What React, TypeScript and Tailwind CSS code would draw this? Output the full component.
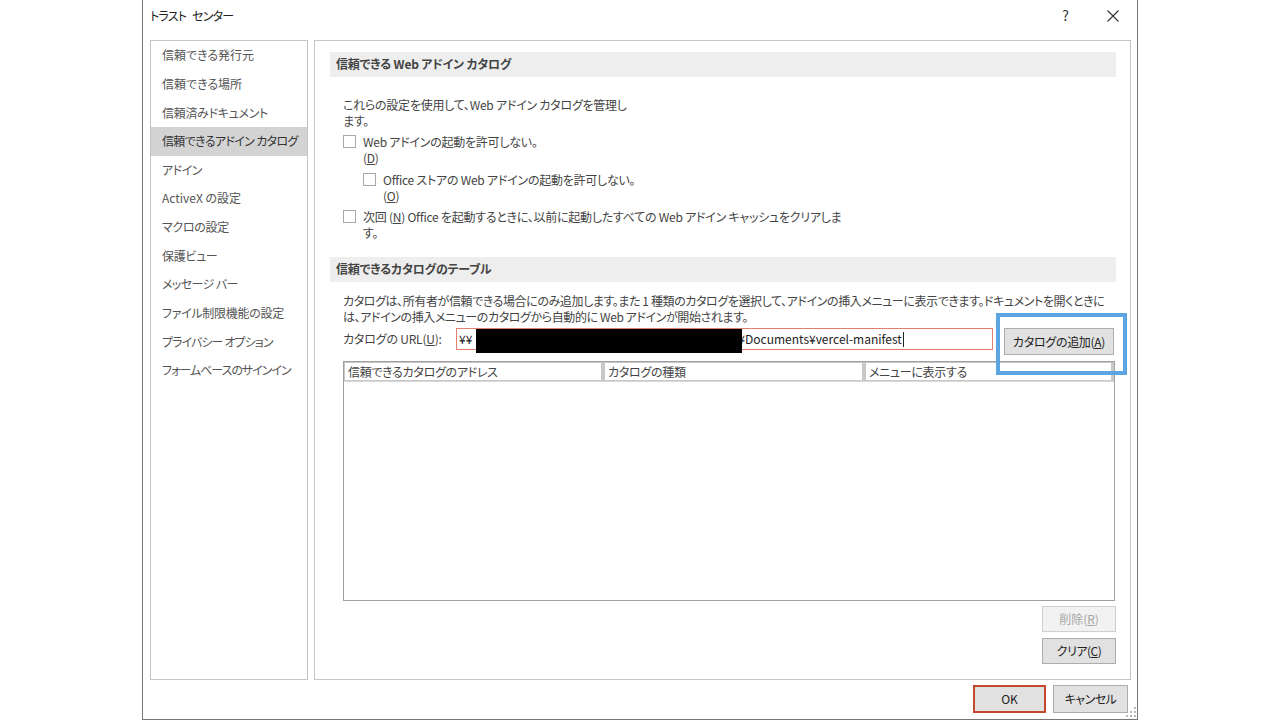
import React from "react";

const font = { fontFamily: '"Noto Sans CJK JP", "Noto Sans", sans-serif' };

const navItems: [string, string][] = [
  ["信頼できる発行元", ""],
  ["信頼できる場所", ""],
  ["信頼済みドキュメント", "tracking-[-0.3px]"],
  ["信頼できるアドイン カタログ", "tracking-[-0.65px]"],
  ["アドイン", "tracking-[-0.5px]"],
  ["ActiveX の設定", ""],
  ["マクロの設定", "tracking-[-0.3px]"],
  ["保護ビュー", "tracking-[-0.3px]"],
  ["メッセージ バー", "tracking-[-0.6px]"],
  ["ファイル制限機能の設定", "tracking-[-0.3px]"],
  ["プライバシー オプション", "tracking-[-0.9px]"],
  ["フォームベースのサインイン", "tracking-[-1px]"],
];

function Checkbox() {
  return <div className="w-[13px] h-[13px] border border-[#a8a8a8] bg-white shrink-0 mt-[1px]" />;
}

function SectionHeader({ children }: { children: React.ReactNode }) {
  return (
    <div className="h-[25px] bg-[#eeeeee] flex items-center pl-[6px] pb-[2px] font-bold text-[12px] text-[#444444] tracking-[-0.2px]">
      {children}
    </div>
  );
}

export default function App() {
  return (
    <div
      className="w-[1280px] h-[720px] bg-white pl-[142px] [font-feature-settings:'palt'] text-[#444444]"
      style={font}
    >
      <div className="relative w-[996px] h-[720px] border-l border-r border-b border-[#777777] bg-white flex flex-col">
        {/* title bar */}
        <div className="h-[40px] flex items-start pt-[7px] pl-[7px] pr-[18px]">
          <div className="text-[12px] text-[#222222] leading-[18px] tracking-[-0.8px]">
            トラスト<span className="inline-block w-[4px]" /> センター
          </div>
          <div className="ml-auto flex items-start gap-[38px]">
            <div className="text-[14px] text-[#333333] leading-[18px] mt-[-1px]">?</div>
            <svg width="12" height="12" viewBox="0 0 12 12" className="mt-[3px]">
              <path d="M0.5 0.5 L11.5 11.5 M11.5 0.5 L0.5 11.5" stroke="#333333" strokeWidth="1.1" />
            </svg>
          </div>
        </div>

        {/* panels */}
        <div className="flex h-[640px] pl-[7px] gap-[6px]">
          {/* nav */}
          <div className="w-[158px] h-full border border-[#c4c4c4] flex flex-col">
            {navItems.map(([t, tr], i) => (
              <div
                key={t}
                className={
                  "h-[28.64px] flex items-center pl-[11px] text-[12px] whitespace-nowrap " +
                  tr +
                  " " +
                  (i === 3 ? "bg-[#d3d3d3] text-[#333333]" : "text-[#555555]")
                }
              >
                {t}
              </div>
            ))}
          </div>

          {/* right panel */}
          <div className="w-[817px] h-full border border-[#c4c4c4] pl-[15px] pr-[14px] pt-[11px] flex flex-col">
            <SectionHeader>信頼できる Web アドイン カタログ</SectionHeader>

            <div className="pl-[13px] text-[12px] leading-[15.5px] text-[#444444] tracking-[-0.25px]">
              <div className="mt-[20px] whitespace-nowrap">
                これらの設定を使用して、Web アドイン カタログを管理し
                <br />
                ます。
              </div>

              <div className="flex gap-[7px] mt-[6px]">
                <Checkbox />
                <div className="whitespace-nowrap">
                  Web アドインの起動を許可しない。
                  <br />(<span className="underline">D</span>)
                </div>
              </div>

              <div className="flex gap-[7px] mt-[7px] pl-[20px]">
                <Checkbox />
                <div className="whitespace-nowrap">
                  Office ストアの Web アドインの起動を許可しない。
                  <br />(<span className="underline">O</span>)
                </div>
              </div>

              <div className="flex gap-[7px] mt-[6px]">
                <Checkbox />
                <div className="whitespace-nowrap">
                  次回 (<span className="underline">N</span>) Office を起動するときに、以前に起動したすべての Web アドイン キャッシュをクリアしま
                  <br />す。
                </div>
              </div>
            </div>

            <div className="mt-[17px]">
              <SectionHeader>信頼できるカタログのテーブル</SectionHeader>
            </div>

            <div className="pl-[13px] text-[12px] text-[#444444]">
              <div className="mt-[11px] leading-[16px] whitespace-nowrap tracking-[-0.4px]">
                カタログは、所有者が信頼できる場合にのみ追加します。また 1 種類のカタログを選択して、アドインの挿入メニューに表示できます。ドキュメントを開くときに
                <br />
                は、アドインの挿入メニューのカタログから自動的に Web アドインが開始されます。
              </div>

              <div className="flex items-start mt-[3px] h-[33px]">
                <div className="w-[113px] pt-[3px] leading-[16px] whitespace-nowrap tracking-[-0.2px]">
                  カタログの URL(<span className="underline">U</span>):
                </div>
                <div className="relative w-[537px] h-[22px] border border-[#e08070] bg-white flex items-center pl-[2px] text-[12px] text-[#222222]">
                  <span>¥¥</span>
                  <span className="inline-block w-[266px] shrink-0" />
                  <span className="whitespace-nowrap">¥Documents¥vercel-manifest</span>
                  <span className="inline-block w-px h-[15px] bg-[#222222] ml-[1px]" />
                  <div className="absolute left-[19px] top-[0px] w-[266px] h-[24px] bg-black" />
                </div>
                <div className="ml-[11px] w-[110px] h-[27px] border border-[#adadad] bg-[#e1e1e1] flex items-center justify-center text-[12px] text-[#222222] whitespace-nowrap tracking-[-0.3px]">
                  カタログの追加(<span className="underline">A</span>)
                </div>
              </div>

              {/* table */}
              <div className="w-[772px] h-[240px] border border-[#a0a0a0] bg-white flex flex-col">
                <div className="flex h-[20px] border-b border-[#d8d8d8]">
                  {[
                    ["信頼できるカタログのアドレス", "w-[260px]"],
                    ["カタログの種類", "w-[261px]"],
                    ["メニューに表示する", "flex-1"],
                  ].map(([t, w]) => (
                    <div
                      key={t}
                      className={
                        w +
                        " h-full border border-[#c8c8c8] border-r-[3px] border-r-[#c8c8c8] bg-white flex items-center pl-[3px] text-[12px] text-[#444444] whitespace-nowrap tracking-[-0.3px]"
                      }
                    >
                      {t}
                    </div>
                  ))}
                </div>
              </div>

              <div className="flex flex-col items-end gap-[6px] mt-[5px]">
                <div className="w-[74px] h-[26px] border border-[#cfcfcf] bg-[#f2f2f2] flex items-center justify-center text-[12px] text-[#a6a6a6]">
                  削除(<span className="underline">R</span>)
                </div>
                <div className="w-[74px] h-[26px] border border-[#adadad] bg-[#e1e1e1] flex items-center justify-center text-[12px] text-[#222222] tracking-[-0.5px]">
                  クリア(<span className="underline">C</span>)
                </div>
              </div>
            </div>
          </div>
        </div>

        {/* bottom buttons */}
        <div className="flex justify-end gap-[7px] pr-[9px] pt-[5px]">
          <div className="w-[73px] h-[28px] border-2 border-[#c4482c] bg-[#e1e1e1] flex items-center justify-center text-[12px] text-[#222222]">
            OK
          </div>
          <div className="w-[75px] h-[28px] border border-[#adadad] bg-[#e1e1e1] flex items-center justify-center text-[12px] text-[#222222] tracking-[-0.5px]">
            キャンセル
          </div>
        </div>

        {/* resize grip */}
        <svg className="absolute right-[1px] bottom-[2px]" width="10" height="10" viewBox="0 0 10 10">
          {[
            [8, 0], [8, 4], [4, 4], [8, 8], [4, 8], [0, 8],
          ].map(([x, y], i) => (
            <rect key={i} x={x} y={y} width="2" height="2" fill="#b8b8b8" />
          ))}
        </svg>

        {/* highlight annotation */}
        <div className="absolute left-[853px] top-[313px] w-[131px] h-[62px] border-[4px] border-[#5ba5e3]" />
      </div>
    </div>
  );
}
